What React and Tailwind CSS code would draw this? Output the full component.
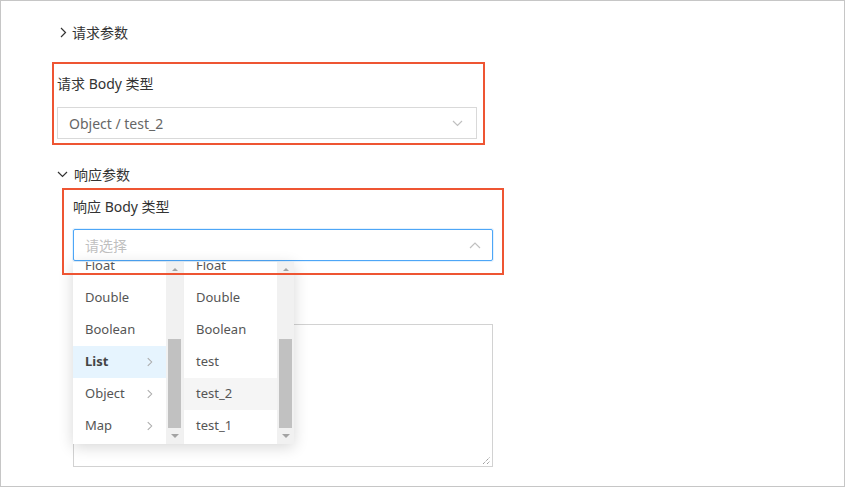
import React from "react";

const font = { fontFamily: '"Noto Sans", "Noto Sans CJK SC", sans-serif' };

function Chevron({ dir = "right", className = "" }) {
  const pts = {
    right: "2,1 6.5,5.5 2,10",
    down: "1,3 5.5,7.5 10,3",
    up: "1,8 6,3 11,8",
  }[dir];
  const vb = dir === "right" ? "0 0 8 11" : "0 0 12 10";
  return (
    <svg viewBox={vb} className={className} fill="none" stroke="currentColor" strokeWidth="1.2">
      <polyline points={pts} />
    </svg>
  );
}

function ScrollBar() {
  return (
    <div className="w-[17px] bg-[#f1f1f1] relative flex flex-col items-center">
      <div className="h-[9px] flex items-end justify-center">
        <div className="w-0 h-0 border-x-[3px] border-x-transparent border-b-[3px] border-b-[#a3a3a3]" />
      </div>
      <div className="mt-[68px] w-[13px] h-[89px] bg-[#c1c1c1]" />
      <div className="mt-[6px] w-0 h-0 border-x-[4px] border-x-transparent border-t-[4px] border-t-[#a3a3a3]" />
    </div>
  );
}

function Menu({ items }) {
  return (
    <div className="w-[110px] h-[182px] flex bg-white overflow-hidden">
      <div className="flex-1 overflow-hidden">
        <div className="-mt-[12px]">
          {items.map((it) => (
            <div
              key={it.label}
              className={`h-[32px] flex items-center justify-between pl-[12px] pr-[12px] text-[13px] ${
                it.active ? "bg-[#e6f4fe] font-bold text-[#444]" : it.hover ? "bg-[#f5f5f5] text-[#555]" : "text-[#555]"
              }`}
            >
              <span>{it.label}</span>
              {it.arrow && <Chevron dir="right" className="w-[7px] h-[10px] text-[#aaa] -translate-x-[1px]" />}
            </div>
          ))}
        </div>
      </div>
      <ScrollBar />
    </div>
  );
}

export default function App() {
  const left = [
    { label: "Float" },
    { label: "Double" },
    { label: "Boolean" },
    { label: "List", arrow: true, active: true },
    { label: "Object", arrow: true },
    { label: "Map", arrow: true },
  ];
  const right = [
    { label: "Float" },
    { label: "Double" },
    { label: "Boolean" },
    { label: "test" },
    { label: "test_2", hover: true },
    { label: "test_1" },
  ];

  return (
    <div style={font} className="w-[845px] h-[487px] border border-[#c6c6c6] bg-white overflow-hidden text-[#333]">
      <div className="pl-[51px] pt-[21px]">
        {/* 请求参数 */}
        <div className="h-[20px] flex items-center gap-[5px] pl-[7px] text-[14px]">
          <Chevron dir="right" className="w-[8px] h-[11px] text-[#333]" />
          <span>请求参数</span>
        </div>

        <div className="mt-[20px] w-[433px] border-2 border-[#ee5533] px-[3px] pt-[9px] pb-[4px]">
          <div className="h-[20px] flex items-center text-[14px]">请求 Body 类型</div>
          <div className="mt-[14px] h-[32px] w-[420px] border border-[#d9d9d9] flex items-center justify-between pl-[11px] pr-[12px] text-[14px] text-[#666]">
            <span>Object / test_2</span>
            <Chevron dir="down" className="w-[12px] h-[10px] text-[#c0c0c0]" />
          </div>
        </div>

        {/* 响应参数 */}
        <div className="mt-[19px] h-[20px] flex items-center gap-[5px] pl-[5px] text-[14px]">
          <Chevron dir="down" className="w-[12px] h-[10px] text-[#333]" />
          <span>响应参数</span>
        </div>

        <div className="relative ml-[10px] mt-[4px] w-[442px] px-[11px] pt-[8px] pb-[14px]">
          <div className="absolute inset-0 border-2 border-[#ee5533] z-20 pointer-events-none" />
          <div className="h-[20px] flex items-center text-[14px]">响应 Body 类型</div>
          <div className="relative mt-[13px]">
            <div className="relative z-10 h-[32px] w-[420px] border border-[#4da6f7] rounded-[2px] bg-white flex items-center justify-between pl-[11px] pr-[11px] text-[14px] text-[#bfbfbf] shadow-[0_0_0_1px_rgba(77,166,247,0.15)]">
              <span>请选择</span>
              <Chevron dir="up" className="w-[12px] h-[10px] text-[#c0c0c0]" />
            </div>
            <div className="absolute left-0 top-[33px] z-[15] flex gap-px shadow-[0_3px_14px_rgba(0,0,0,0.16)] bg-[#f0f0f0]">
              <Menu items={left} />
              <Menu items={right} />
            </div>
          </div>
        </div>

        <div className="ml-[21px] mt-[49px] w-[420px] h-[143px] border border-[#d2d2d2] relative">
          <svg className="absolute right-[1px] bottom-[1px] w-[10px] h-[10px]" viewBox="0 0 10 10" stroke="#777" strokeWidth="1">
            <line x1="2" y1="9" x2="9" y2="2" strokeDasharray="1 1" />
            <line x1="6" y1="9" x2="9" y2="6" strokeDasharray="1 1" />
          </svg>
        </div>
      </div>
    </div>
  );
}
